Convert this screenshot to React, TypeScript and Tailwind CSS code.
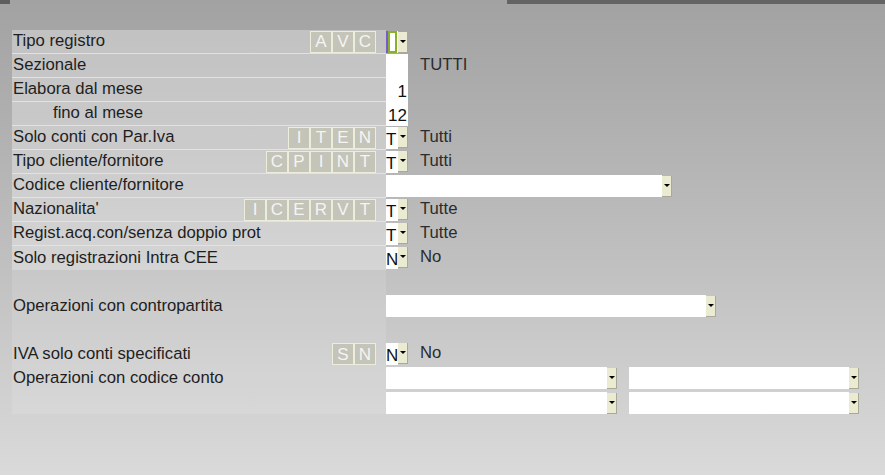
import React from "react";

const Arrow = () => (
  <div className="w-0 h-0 border-l-[3px] border-r-[3px] border-t-[3px] border-l-transparent border-r-transparent border-t-black" />
);

const Drop = () => (
  <div className="w-[10px] h-[21px] bg-[#ebebd2] border-r border-b border-[#a9a99a] flex justify-center pt-[8px] shrink-0">
    <Arrow />
  </div>
);

const Letters = ({ letters }: { letters: string[] }) => (
  <div className="flex">
    {letters.map((l, i) => (
      <div
        key={i}
        className="w-[22px] h-[22px] border border-[#ededdc] bg-[#c4c4b8] text-[#f4f4f4] flex items-center justify-center text-[17px] leading-none"
      >
        {l}
      </div>
    ))}
  </div>
);

const Row = ({
  label,
  indent,
  letters,
  sep,
  light,
  children,
}: {
  label?: string;
  indent?: boolean;
  letters?: string[];
  sep?: boolean;
  light?: boolean;
  children?: React.ReactNode;
}) => (
  <div className="flex h-[24px]">
    <div
      className={
        "w-[374px] shrink-0 flex items-center pr-[10px] " +
        (light ? "bg-[#ffffff]/[0.12] " : "bg-[#ffffff]/[0.32] ") +
        (sep ? "border-b border-[#e2e2e2]" : "")
      }
    >
      <div className={(indent ? "pl-[41px]" : "pl-[1px]") + " flex-1 text-[16.7px] text-[#1e1e1e] -mt-[1px] whitespace-nowrap"}>
        {label}
      </div>
      {letters && <Letters letters={letters} />}
    </div>
    <div className="flex items-center">{children}</div>
  </div>
);

const TField = ({ v, txt }: { v: string; txt: string }) => (
  <div className="flex items-center">
    <div className="w-[12px] h-[22px] bg-white text-[17px] leading-[26px] text-[#111] overflow-hidden">{v}</div>
    <Drop />
    <div className="ml-[12px] text-[16.7px] text-[#2c2c2c] -mt-[3px]">{txt}</div>
  </div>
);

const Wide = ({ w }: { w: string }) => (
  <div className="flex items-end">
    <div className={w + " h-[22px] bg-white"} />
    <Drop />
  </div>
);

export default function App() {
  return (
    <div
      className="w-[885px] h-[475px] overflow-hidden bg-gradient-to-b from-[#a2a2a2] via-[#bdbdbd] to-[#dadada] relative"
      style={{ fontFamily: '"Liberation Sans", Arial, sans-serif' }}
    >
      <div className="flex h-[4px]">
        <div className="w-[10px] bg-[#5e5e5e]" />
        <div className="w-[497px]" />
        <div className="flex-1 bg-[#646464]" />
      </div>
      <div className="pl-[12px] pt-[26px]">
        <Row label="Tipo registro" letters={["A", "V", "C"]} sep>
          <div className="flex items-center">
            <div className="w-[12px] h-[22px] bg-white flex">
              <div className="w-[2px] h-[22px] bg-[#7a5cc8]" />
              <div className="w-[9px] h-[22px] border-[2px] border-[#86b22a] bg-white" />
            </div>
            <Drop />
          </div>
        </Row>
        <Row label="Sezionale" sep>
          <div className="w-[22px] h-[24px] bg-white" />
          <div className="ml-[12px] text-[16.7px] text-[#2c2c2c] -mt-[3px]">TUTTI</div>
        </Row>
        <Row label="Elabora dal mese" sep>
          <div className="w-[22px] h-[24px] bg-white text-right text-[17px] leading-[28px] text-[#111] pr-[1px]">1</div>
        </Row>
        <Row label="fino al mese" indent sep>
          <div className="w-[22px] h-[24px] bg-white text-right text-[17px] leading-[28px] text-[#111] pr-[1px]">12</div>
        </Row>
        <Row label="Solo conti con Par.Iva" letters={["I", "T", "E", "N"]} sep>
          <TField v="T" txt="Tutti" />
        </Row>
        <Row label="Tipo cliente/fornitore" letters={["C", "P", "I", "N", "T"]} sep>
          <TField v="T" txt="Tutti" />
        </Row>
        <Row label="Codice cliente/fornitore" sep>
          <Wide w="w-[276px]" />
        </Row>
        <Row label="Nazionalita'" letters={["I", "C", "E", "R", "V", "T"]} sep>
          <TField v="T" txt="Tutte" />
        </Row>
        <Row label="Regist.acq.con/senza doppio prot" sep>
          <TField v="T" txt="Tutte" />
        </Row>
        <Row label="Solo registrazioni Intra CEE">
          <TField v="N" txt="No" />
        </Row>
        <Row light />
        <Row light label="Operazioni con contropartita">
          <Wide w="w-[320px]" />
        </Row>
        <Row light />
        <Row light label="IVA solo conti specificati" letters={["S", "N"]}>
          <TField v="N" txt="No" />
        </Row>
        <Row light label="Operazioni con codice conto">
          <Wide w="w-[221px]" />
          <div className="w-[12px]" />
          <Wide w="w-[220px]" />
        </Row>
        <Row light>
          <div className="border-t border-[#d0d0d0] flex items-end">
            <Wide w="w-[221px]" />
          </div>
          <div className="w-[12px]" />
          <div className="border-t border-[#d0d0d0] flex items-end">
            <Wide w="w-[220px]" />
          </div>
        </Row>
      </div>
    </div>
  );
}
